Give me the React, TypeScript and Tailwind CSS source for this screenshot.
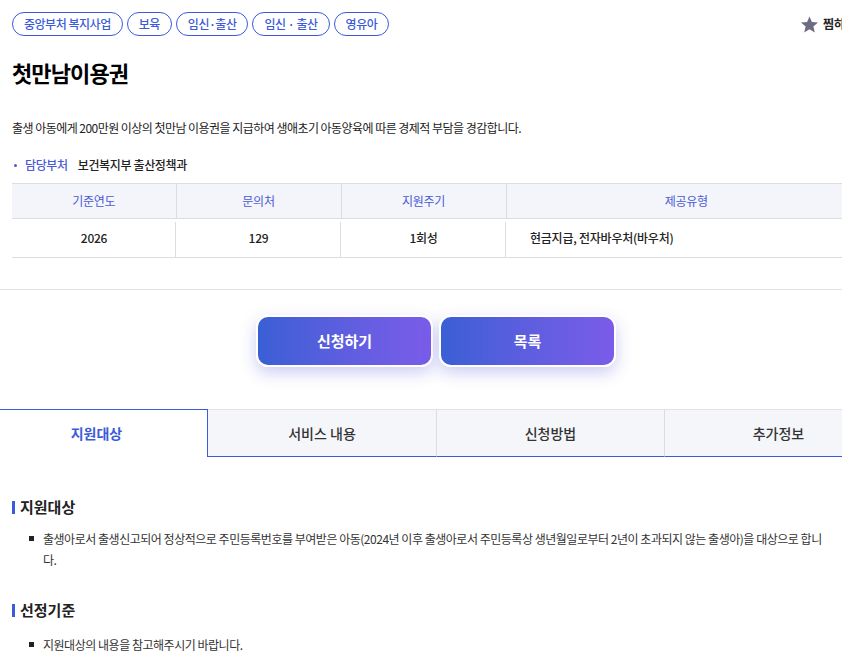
import React from 'react';

const tags = ['중앙부처 복지사업', '보육', '임신·출산', '임신 · 출산', '영유아'];
const tabs = ['지원대상', '서비스 내용', '신청방법', '추가정보'];

const Star = () => (
  <svg viewBox="0 0 24 24" className="w-[19px] h-[19px]" fill="#6b6e82">
    <path d="M12 1.8l3.05 7.1 7.7.62-5.86 5.03 1.8 7.53L12 18.05l-6.69 4.03 1.8-7.53L1.25 9.52l7.7-.62z" />
  </svg>
);

const SectionTitle = ({ title }: { title: string }) => (
  <h3 className="flex items-center gap-[5px] text-[15px] font-bold text-[#222] leading-[20px]">
    <span className="w-[3px] h-[13px] bg-[#3b5bdb]" />
    {title}
  </h3>
);

const Bullet = ({ children }: { children: React.ReactNode }) => (
  <li className="flex text-[12px] leading-[21px] text-[#333] tracking-[-0.04em]">
    <span className="w-[5px] h-[5px] bg-[#222] mt-[8px] ml-[17px] mr-[9px] shrink-0" />
    <span>{children}</span>
  </li>
);

export default function App() {
  return (
    <div
      className="w-[842px] h-[666px] overflow-hidden bg-white relative"
      style={{ fontFamily: '"Noto Sans CJK KR", "Noto Sans", sans-serif' }}
    >
      <div className="w-[878px] px-3 pt-3">
        <div className="flex items-center justify-between">
          <div className="flex gap-[4px]">
            {tags.map((t) => (
              <span
                key={t}
                className="h-[24px] px-[11px] rounded-full border border-[#3b5bdb] text-[#3b5bdb] text-[12px] font-medium leading-[22px] tracking-[-0.04em]"
              >
                {t}
              </span>
            ))}
          </div>
          <div className="flex items-center gap-[4px] text-[12px] font-bold text-[#222] pr-[10px]">
            <Star />
            찜하기
          </div>
        </div>

        <h1 className="mt-[22px] text-[22px] font-bold text-black leading-[28px] tracking-[-0.04em]">
          첫만남이용권
        </h1>

        <p className="mt-[33px] text-[12px] leading-[18px] text-[#222] tracking-[-0.045em]">
          출생 아동에게 200만원 이상의 첫만남 이용권을 지급하여 생애초기 아동양육에 따른 경제적 부담을 경감합니다.
        </p>

        <div className="mt-[19px] flex items-center text-[12px] leading-[18px] tracking-[-0.03em]">
          <span className="w-[3px] h-[3px] rounded-full bg-[#4a5bd6] ml-[2px] mr-[8px]" />
          <span className="text-[#4a5bd6] font-medium">담당부처</span>
          <span className="ml-[10px] text-[#222] font-medium">보건복지부 출산정책과</span>
        </div>

        <table className="mt-[9px] w-full border-collapse text-[12px] tracking-[-0.02em]">
          <thead>
            <tr className="bg-[#f4f5fa] border-y border-[#dcdde2] h-[35px]">
              <th className="w-[164px] font-normal text-[#4a5bd6] border-r border-[#dcdde2]">기준연도</th>
              <th className="w-[165px] font-normal text-[#4a5bd6] border-r border-[#dcdde2]">문의처</th>
              <th className="w-[165px] font-normal text-[#4a5bd6] border-r border-[#dcdde2]">지원주기</th>
              <th className="font-normal text-[#4a5bd6]">제공유형</th>
            </tr>
          </thead>
          <tbody>
            <tr className="border-b border-[#dcdde2] h-[39px] text-[#222] font-medium">
              <td className="text-center relative">
                2026
                <span className="absolute right-0 top-[3px] bottom-0 w-px bg-[#dcdde2]" />
              </td>
              <td className="text-center relative">
                129
                <span className="absolute right-0 top-[3px] bottom-0 w-px bg-[#dcdde2]" />
              </td>
              <td className="text-center relative">
                1회성
                <span className="absolute right-0 top-[3px] bottom-0 w-px bg-[#dcdde2]" />
              </td>
              <td className="pl-[24px]">현금지급, 전자바우처(바우처)</td>
            </tr>
          </tbody>
        </table>
      </div>

      <div className="mt-[31px] border-t border-[#e2e2e2]" />

      <div className="w-[872px] mt-[25px] flex justify-center gap-[6px]">
        {['신청하기', '목록'].map((b) => (
          <button
            key={b}
            className="w-[177px] h-[52px] rounded-[12px] border-2 border-white bg-gradient-to-r from-[#3a5fd5] to-[#7a5ce9] text-white text-[15px] font-bold shadow-[0_6px_16px_rgba(90,90,220,0.3)]"
          >
            {b}
          </button>
        ))}
      </div>

      <div className="mt-[42px] ml-[-20px] w-[912px] flex h-[48px]">
        {tabs.map((t, i) =>
          i === 0 ? (
            <div
              key={t}
              className="w-[228px] flex items-center justify-center bg-white border-t border-r border-[#3b5bdb] text-[14px] font-bold text-[#3b5bdb] pl-[6px]"
            >
              {t}
            </div>
          ) : (
            <div
              key={t}
              className={`w-[228px] flex items-center justify-center bg-[#f5f6fa] border-t border-t-[#e2e2e2] border-b border-b-[#3b5bdb] text-[14px] font-medium text-[#333] ${i > 1 ? 'border-l border-l-[#dcdde2]' : ''}`}
            >
              {t}
            </div>
          )
        )}
      </div>

      <div className="px-3 pt-[40px]">
        <SectionTitle title="지원대상" />
        <ul className="mt-[11px]">
          <Bullet>
            출생아로서 출생신고되어 정상적으로 주민등록번호를 부여받은 아동(2024년 이후 출생아로서 주민등록상 생년월일로부터 2년이 초과되지 않는 출생아)을 대상으로 합니다.
          </Bullet>
        </ul>
        <div className="mt-[30px]">
          <SectionTitle title="선정기준" />
        </div>
        <ul className="mt-[14px]">
          <Bullet>지원대상의 내용을 참고해주시기 바랍니다.</Bullet>
        </ul>
      </div>
    </div>
  );
}
